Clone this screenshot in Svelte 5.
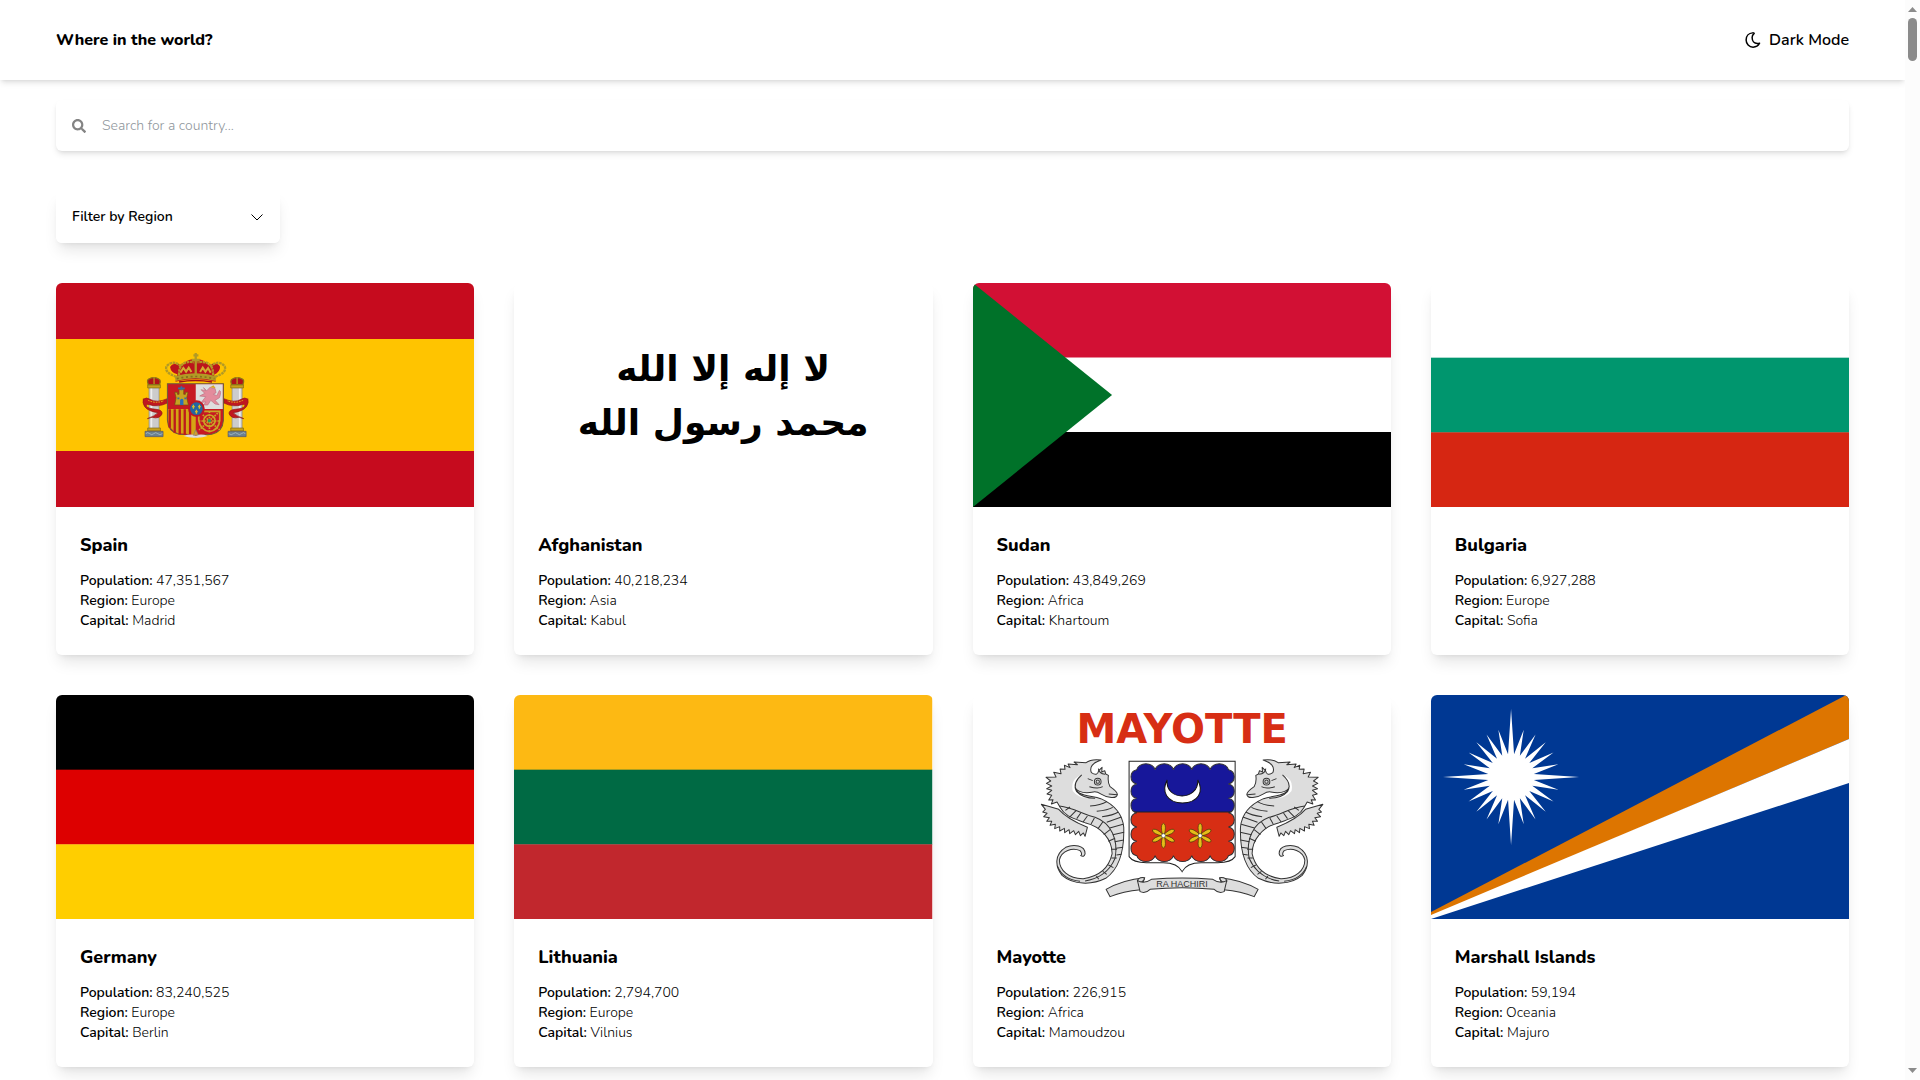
<script lang="ts">
    interface Country {
        name: string;
        population: number;
        region: string;
        capital: string;
        flag: string;
        stripes?: string[];
    }

    const regions = ["Africa", "Americas", "Asia", "Europe", "Oceania"];

    const countries: Country[] = [
        { name: "Spain", population: 47351567, region: "Europe", capital: "Madrid", flag: "es" },
        { name: "Afghanistan", population: 40218234, region: "Asia", capital: "Kabul", flag: "af" },
        { name: "Sudan", population: 43849269, region: "Africa", capital: "Khartoum", flag: "sd" },
        {
            name: "Bulgaria",
            population: 6927288,
            region: "Europe",
            capital: "Sofia",
            flag: "bg",
            stripes: ["#ffffff", "#00966e", "#d62612"],
        },
        {
            name: "Germany",
            population: 83240525,
            region: "Europe",
            capital: "Berlin",
            flag: "de",
            stripes: ["#000000", "#dd0000", "#ffce00"],
        },
        {
            name: "Lithuania",
            population: 2794700,
            region: "Europe",
            capital: "Vilnius",
            flag: "lt",
            stripes: ["#fdb913", "#006a44", "#c1272d"],
        },
        { name: "Mayotte", population: 226915, region: "Africa", capital: "Mamoudzou", flag: "yt" },
        { name: "Marshall Islands", population: 59194, region: "Oceania", capital: "Majuro", flag: "mh" },
    ];

    let search = $state("");
    let region = $state("");
    let dark = $state(false);

    let visible = $derived(
        countries.filter(
            (c) =>
                c.name.toLowerCase().includes(search.toLowerCase()) &&
                (!region || c.region === region),
        ),
    );

    // 24-pointed star, every sixth ray is a long one
    function starPoints(cx: number, cy: number) {
        const points: string[] = [];
        for (let i = 0; i < 48; i++) {
            const angle = (i * Math.PI) / 24;
            const r = i % 2 ? 23 : i % 12 === 0 ? 68 : 49;
            points.push(`${(cx + r * Math.cos(angle)).toFixed(2)},${(cy + r * Math.sin(angle)).toFixed(2)}`);
        }
        return points.join(" ");
    }

    const scallops =
        "M320 209" +
        "a28 22 0 0 1 55 0".repeat(5) +
        "a22 22 0 0 1 0 43".repeat(6) +
        "a28 22 0 0 1 -55 0".repeat(5) +
        "a22 22 0 0 1 0 -43".repeat(6) +
        "Z";
</script>

{#snippet pillar()}
    <path d="M57 136h30v136h-30z" fill="#ccc" stroke="#8a8a8a" stroke-width="2" />
    <path d="M64 138v132" stroke="#eee" stroke-width="5" />
    <path d="M53 134h38v10H53zM53 264h38v9H53z" fill="#c8a21a" stroke="#7d6415" stroke-width="2" />
    <path d="M45 274h54v16H45z" fill="#6b8190" stroke="#556" stroke-width="2" />
    <path d="M47 281q6-6 12 0t12 0t12 0t14 0" fill="none" stroke="#b9c9d0" stroke-width="2" />
    <path d="M55 134q-6-14 2-17q14-8 29 0q8 4 2 17z" fill="#b01319" stroke="#8a7218" stroke-width="4" />
    <path d="M72 132v-20" stroke="#b9971c" stroke-width="4" />
    <path d="M40 178q8-8 20 0q20 12 52-2v13q-28 14-54 5q-8-4-10 4q6 8 30 10q20 2 18 14q-8 16-30 10l-14 4q22-8 32-18q-30-4-40-18q-8-12-4-24z" fill="#c01720" stroke="#8f1a16" stroke-width="2" />
    <path d="M54 181q20 10 48 2" fill="none" stroke="#dba31c" stroke-width="3" stroke-dasharray="5 3" />
{/snippet}

{#snippet seahorse()}
    <path
        d="M34 313l52 15q24 28 86 54l-7 27-5-10-9 8-5-13-10 10-5-12-12 9-2-12-13 9-1-13-14 8 0-13-15 6 2-13-16 3 5-12-15 0 8-11-17-3 10-10-13-4 8-8z"
        class="shape"
    />
    <path
        d="M213 180q-30-4-45 8l-36-2 10 8-28-2 6 11-17-7 2 12-15-1 3 14-22-4 7 14-30 1 14 11-13 7 16 8-15 8 15 5-14 11 14 4-9 14 13-1-5 13 17-6 9 16C105 350 130 355 165 368C215 380 247 420 246 462C236 506 205 530 160 536C115 537 88 510 88 480C94 452 128 441 150 452q8 10 2 15q10 6 13-5C166 435 130 432 107 442C72 463 75 500 96 526C130 555 185 556 227 535C270 505 283 450 281 382C278 350 262 318 212 296C175 285 136 290 131 252C134 272 155 283 190 276C208 272 216 291 240 292q20 3 22-9q-2-9-22-23q-8-13-5-34l-8-4-3-10-9 4 1-14-10 10q-4 18-22 6Q174 193 213 180z"
        class="shape"
    />
    <path d="M155 225q-30 26-15 50q18 20 55 20q-48 4-67-22q-8-36 27-48z" fill="#fff" />
    <path d="M155 225q-30 26-15 50q18 20 55 20" class="line" />
    <path d="M88 318C130 322 160 345 195 352C245 370 265 420 255 475C237 518 200 538 165 543" class="line" />
    <path d="M106 331l14-10M118 352l20-20M140 356l12-17M159 366l13-18M183 372l10-18M204 386l14-20M221 404l19-15M235 424l20-9M243 448h18M244 474h16M235 495l15 8M218 514l12 9M199 528l7 10" class="line" />
    <path d="M180 318q32-2 50-13M200 334q34-4 48-12M216 350q33-4 49-14M230 367l44-16M239 384l40-11M248 404l34-7M254 425l27-5M258 445l21-3M259 465l15-2" class="line" />
    <circle cx="203" cy="245" r="10" class="shape" />
    <circle cx="203" cy="245" r="5" class="line" />
    <path d="M173 236l15 6M178 260q26 8 40 0M236 282l25 2M205 206q2 15 20 17" class="line" />
    <path d="M83 500Q98 538 150 544" class="line" />
{/snippet}

{#snippet flag(country: Country)}
    <svg
        class="flag"
        viewBox="0 0 418 224"
        preserveAspectRatio="none"
        role="img"
        aria-label="Flag of {country.name}"
    >
        {#if country.stripes}
            {#each country.stripes as color, i}
                <rect y={i * 74.67} width="418" height="75" fill={color} />
            {/each}
        {:else if country.flag === "es"}
            <rect width="418" height="224" fill="#c60b1e" />
            <rect y="56" width="418" height="112" fill="#ffc400" />
            <g transform="translate(74 57) scale(.3333)">
                {@render pillar()}
                <g transform="translate(393 0) scale(-1 1)">{@render pillar()}</g>
                <path d="M112 131h168v110q-2 35-35 42q-28 2-49 8q-20-8-49-8q-33-7-35-42z" fill="#c71923" stroke="#6c5b3c" stroke-width="3" />
                <path d="M197 133h81v74h-81z" fill="#dedede" />
                <path d="M114 207h83v79q-30-6-54-6q-26-10-29-40z" fill="#d5a414" />
                <path d="M119 208v55M134 208v70M149 208v75M164 208v77M180 208v79" stroke="#bd1a1c" stroke-width="7" />
                <path d="M134 195l4-22-4-16h8v6h5v-15h14v15h5v-6h8l-4 16 5 22z" fill="#c6a222" stroke="#6d5310" stroke-width="2" />
                <path d="M150 195v-15q6-8 10 0v15z" fill="#2a6fba" />
                <path d="M144 145h20M154 139v12M142 175h6M163 175h6" stroke="#356da3" stroke-width="5" />
                <path d="M220 143l10 9 10-10 15 4 3 12-8 5 10 4 8-16q7 3 0 22l-13 8 12 13-12-2-13-11-9 14h-13l8-9-14 1 13-17-18-2 15-8-11-11 14 3z" fill="#e38b9c" stroke="#bd7080" stroke-width="2" />
                <path d="M240 142l10-6 7 9z" fill="#d9a420" />
                <g fill="none" stroke="#c9a525" stroke-width="5">
                    <path d="M206 214h63v27q-3 29-31 34q-28-6-32-34z" />
                    <path d="M206 214l63 56M269 214l-62 56M238 214v62M206 243h63" stroke-dasharray="5 3" />
                    <circle cx="238" cy="242" r="17" />
                </g>
                <circle cx="238" cy="242" r="5" fill="#2b9a55" />
                <path d="M160 288q25-8 37-1q16-7 36 1q-19 6-36 5q-18 1-37-5z" fill="#ddd" />
                <path d="M190 286l7-17 8 16z" fill="#d7a02a" stroke="#787" stroke-width="2" />
                <circle cx="199" cy="206" r="22" fill="#2366a2" stroke="#bd1824" stroke-width="6" />
                <path d="M190 194v12M186 200h8M208 194v12M204 200h8M199 209v12M195 215h8" stroke="#dfbd28" stroke-width="4" />
                <path d="M136 125q60-14 121 0l-5-21q18-8 18-24q-10-17-34-4q-22-24-39-16q-20-8-40 16q-27-12-37 5q2 17 22 22z" fill="#bb151c" />
                <g fill="none" stroke="#b29a25" stroke-width="7">
                    <path d="M139 110Q103 99 109 79Q130 57 153 80M147 106Q145 59 192 67M249 106Q250 59 202 67M255 110Q291 99 284 79Q265 57 240 80" stroke-dasharray="8 2" />
                    <path d="M197 107V54M185 60h24M197 39v15M190 46h15" />
                    <path d="M135 116q61-17 123 0" stroke-width="15" />
                </g>
                <path d="M140 116q57-13 113 0" fill="none" stroke="#856f1c" stroke-width="5" stroke-dasharray="6 8" />
                <path d="M151 98l9-14 8 11 8-12 8 13M210 96l8-13 8 12 8-11 8 14" fill="none" stroke="#d2ac30" stroke-width="6" />
                <path d="M147 126q49-9 99 0" fill="none" stroke="#9c111c" stroke-width="5" />
            </g>
        {:else if country.flag === "af"}
            <rect width="418" height="224" fill="#fff" />
            <g class="script" direction="rtl" lang="ar">
                <text x="209" y="98">لا إله إلا الله</text>
                <text x="209" y="152">محمد رسول الله</text>
            </g>
        {:else if country.flag === "sd"}
            <rect width="418" height="224" fill="#fff" />
            <rect width="418" height="74.5" fill="#d21034" />
            <rect y="149" width="418" height="75" />
            <path d="M0 0l139 112L0 224z" fill="#007229" />
        {:else if country.flag === "yt"}
            <rect width="418" height="224" fill="#fff" />
            <text class="banner" x="209" y="48">MAYOTTE</text>
            <g transform="translate(57 5) scale(.3333)">
                {@render seahorse()}
                <g transform="translate(912 0) scale(-1 1)">{@render seahorse()}</g>
                <path d="M297 184h318v286q-12 18-52 18h-50q-44 0-57 27q-13-27-57-27h-50q-40 0-52-18z" fill="#fff" stroke="#222" stroke-width="3" />
                <clipPath id="lower-half"><path d="M290 336h340v160H290z" /></clipPath>
                <path d={scallops} fill="#17179a" />
                <path d={scallops} fill="#d72e14" clip-path="url(#lower-half)" />
                <path d={scallops} class="line" />
                <path d="M312 336h292" stroke="#222" stroke-width="3" />
                <path d="M411 240C405 304 506 304 503 240C522 275 505 308 457 309C410 308 393 275 411 240z" fill="#fff" stroke="#111" stroke-width="3" />
                {#each [400, 510] as x}
                    <g transform="translate({x} 407)">
                        {#each [0, 62, 118, 180, 242, 298] as angle}
                            <path d="M-3-4q-6-24 0-31q3-4 6 0q6 7 0 31z" fill="#e5bd18" stroke="#47360b" stroke-width="2" transform="rotate({angle})" />
                        {/each}
                        <circle r="6" fill="#fff" stroke="#555" stroke-width="2" />
                    </g>
                {/each}
                <path d="M228 568q50-29 116-35l-13 36q-52 5-91 21zM684 568q-50-29-116-35l13 36q52 5 91 21z" class="shape" />
                <path d="M322 544q2-12 19-11q5 5-6 13zM590 544q-2-12-19-11q-5 5 6 13z" class="shape" />
                <path d="M322 541q18 13 42-3q92-8 184 0q24 16 42 3l-8 34q-16 7-30-7q-96-10-192 0q-14 14-30 7z" class="shape" />
            </g>
            <text class="motto" x="209" y="192">RA HACHIRI</text>
        {:else if country.flag === "mh"}
            <rect width="418" height="224" fill="#003893" />
            <path d="M0 217L415 0h3v44L0 221z" fill="#dd7500" />
            <path d="M0 220L418 44v44L0 224z" fill="#fff" />
            <polygon points={starPoints(80, 82)} fill="#fff" />
        {/if}
    </svg>
{/snippet}

<div class="page" class:dark>
    <div class="content">
        <header>
            <h1>Where in the world?</h1>
            <button type="button" class="theme-btn" onclick={() => (dark = !dark)}>
                <svg width="16" height="16" viewBox="0 0 512 512" fill="none" stroke="currentColor" stroke-width="48" stroke-linejoin="round" aria-hidden="true">
                    <path d="M245 28C120 38 36 132 36 255c0 124 96 229 222 229 88 0 168-48 208-126-24 8-48 8-72 8-105 0-166-86-166-190 0-54 28-98 60-124 16-14 0-26-43-24z" />
                </svg>
                Dark Mode
            </button>
        </header>

        <main>
            <div class="search">
                <label for="search" aria-label="Search for a country">
                    <svg width="14" height="14" viewBox="0 0 512 512" fill="currentColor" aria-hidden="true">
                        <path d="M505 442.7L405.3 343c-4.5-4.5-10.6-7-17-7H372c27.6-35.3 44-79.7 44-128C416 93.1 322.9 0 208 0S0 93.1 0 208s93.1 208 208 208c48.3 0 92.7-16.4 128-44v16.3c0 6.4 2.5 12.5 7 17l99.7 99.7c9.4 9.4 24.6 9.4 33.9 0l28.3-28.3c9.4-9.4 9.4-24.6.1-34zM208 336c-70.7 0-128-57.2-128-128 0-70.7 57.2-128 128-128 70.7 0 128 57.2 128 128 0 70.7-57.2 128-128 128z" />
                    </svg>
                </label>
                <input id="search" type="text" placeholder="Search for a country..." bind:value={search} />
            </div>

            <div class="filter">
                <select aria-label="Filter by Region" bind:value={region}>
                    <option value="">Filter by Region</option>
                    {#each regions as name}
                        <option value={name}>{name}</option>
                    {/each}
                </select>
                <svg width="12" height="12" viewBox="0 0 12 12" fill="none" stroke="currentColor" aria-hidden="true">
                    <path d="M.5 3.5L6 9l5.500-5.500" />
                </svg>
            </div>

            <section class="countries">
                {#each visible as country (country.name)}
                    <article class="card">
                        {@render flag(country)}
                        <div class="details">
                            <h2>{country.name}</h2>
                            <p><strong>Population:</strong> {country.population.toLocaleString("en-US")}</p>
                            <p><strong>Region:</strong> {country.region}</p>
                            <p><strong>Capital:</strong> {country.capital}</p>
                        </div>
                    </article>
                {/each}
            </section>
        </main>
    </div>

    <div class="scrollbar" aria-hidden="true">
        <svg width="9" height="5" viewBox="0 0 9 5"><path d="M4.500 0L9 5H0z" /></svg>
        <div class="thumb"></div>
        <svg width="9" height="5" viewBox="0 0 9 5"><path d="M0 0h9L4.500 5z" /></svg>
    </div>
</div>

<style>
    :global(body) {
        margin: 0;
        font-family: Nunito, Lato, "Open Sans", sans-serif;
    }

    .page {
        --surface: #fff;
        --text: #000;
        display: grid;
        grid-template-columns: minmax(0, 1fr) 15px;
        min-height: 100vh;
        background: var(--surface);
        color: var(--text);
    }

    .page.dark {
        --surface: #2b3945;
        --text: #fff;
    }

    header {
        display: flex;
        align-items: center;
        justify-content: space-between;
        height: 80px;
        padding: 0 56px;
        box-shadow:
            0 4px 6px -1px rgb(0 0 0 / 0.1),
            0 2px 4px -2px rgb(0 0 0 / 0.1);
    }

    h1 {
        margin: 0;
        font-size: 16px;
        line-height: 24px;
        font-weight: 800;
    }

    .theme-btn {
        display: flex;
        align-items: center;
        gap: 8px;
        padding: 0;
        border: none;
        background: none;
        color: inherit;
        font: inherit;
        font-size: 16px;
        line-height: 24px;
        font-weight: 600;
        cursor: pointer;
    }

    main {
        padding: 20px 56px 0;
    }

    .search {
        display: flex;
        align-items: center;
        height: 51px;
        border-radius: 6px;
        background: var(--surface);
        box-shadow:
            0 4px 6px -1px rgb(0 0 0 / 0.1),
            0 2px 4px -2px rgb(0 0 0 / 0.1);
    }

    .search label {
        display: flex;
        padding: 0 16px;
        color: #848484;
    }

    .search input {
        flex: 1;
        padding: 0;
        border: none;
        outline: none;
        background: transparent;
        color: inherit;
        font: inherit;
        font-size: 14px;
        font-weight: 300;
    }

    .search input::placeholder {
        color: #8f969c;
    }

    .filter {
        display: flex;
        align-items: center;
        position: relative;
        width: 224px;
        margin: 40px 0;
        border-radius: 6px;
        box-shadow:
            0 10px 15px -3px rgb(0 0 0 / 0.1),
            0 4px 6px -4px rgb(0 0 0 / 0.1);
    }

    .filter select {
        appearance: none;
        width: 100%;
        height: 52px;
        padding: 0 16px 2px;
        border: none;
        border-radius: 6px;
        background: var(--surface);
        color: inherit;
        font: inherit;
        font-size: 14px;
        font-weight: 600;
    }

    .filter svg {
        position: absolute;
        right: 17px;
        pointer-events: none;
    }

    .countries {
        display: grid;
        grid-template-columns: repeat(auto-fill, minmax(360px, 1fr));
        gap: 40px;
    }

    .card {
        border-radius: 6px;
        overflow: hidden;
        background: var(--surface);
        box-shadow:
            0 10px 15px -3px rgb(0 0 0 / 0.1),
            0 4px 6px -4px rgb(0 0 0 / 0.1);
    }

    .flag {
        display: block;
        width: 100%;
        height: 224px;
    }

    .flag .shape {
        fill: #ddd;
        stroke: #333;
        stroke-width: 3;
        stroke-linejoin: round;
    }

    .flag .line {
        fill: none;
        stroke: #333;
        stroke-width: 3;
    }

    .script {
        font-family: "DejaVu Sans", sans-serif;
        font-size: 36px;
        font-weight: 700;
        text-anchor: middle;
    }

    .banner {
        fill: #d72e14;
        font-family: "DejaVu Sans", sans-serif;
        font-size: 40px;
        font-weight: 700;
        text-anchor: middle;
    }

    .motto {
        fill: #333;
        font-family: "Liberation Sans", sans-serif;
        font-size: 9px;
        text-anchor: middle;
    }

    .details {
        padding: 24px;
    }

    h2 {
        margin: 0 0 12px;
        font-size: 18px;
        line-height: 28px;
        font-weight: 800;
    }

    .details p {
        margin: 0;
        font-size: 14px;
        line-height: 20px;
        font-weight: 300;
    }

    .details strong {
        font-weight: 600;
    }

    .scrollbar {
        position: sticky;
        top: 0;
        display: flex;
        flex-direction: column;
        align-items: center;
        box-sizing: border-box;
        height: 100vh;
        padding: 7px 0;
        background: #fcfcfc;
        fill: #8b8b8b;
    }

    .thumb {
        width: 9px;
        height: 43px;
        margin: 6px 0 auto;
        border-radius: 5px;
        background: #8b8b8b;
    }
</style>
